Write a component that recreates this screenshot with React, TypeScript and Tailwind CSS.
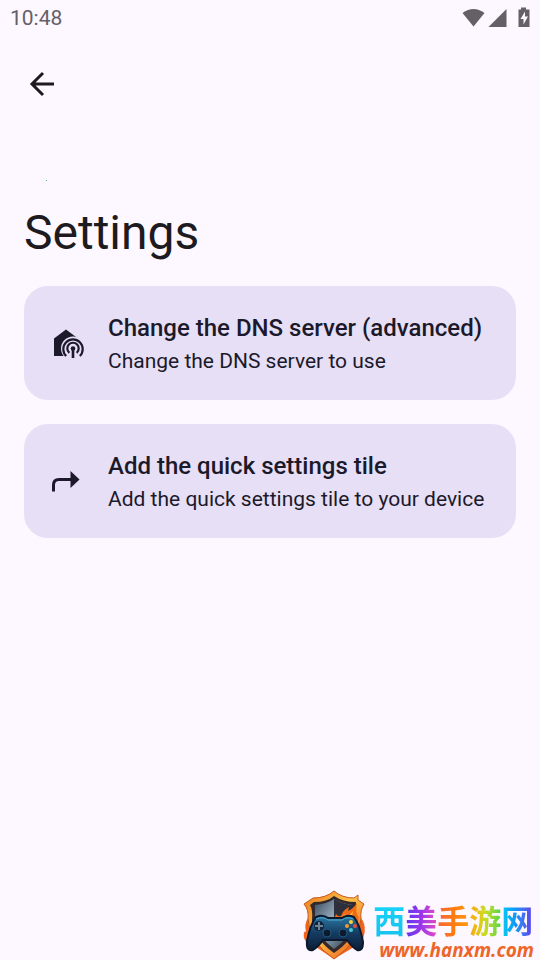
import type { ReactNode } from "react";

const items = [
  {
    title: "Change the DNS server (advanced)",
    copy: "Change the DNS server to use",
    icon: <DnsIcon />,
  },
  {
    title: "Add the quick settings tile",
    copy: "Add the quick settings tile to your device",
    icon: <TileIcon />,
  },
];

const brand = [
  ["西", "bg-linear-to-b from-[#16d8fa] to-[#16c0ee]"],
  ["美", "bg-linear-to-r from-[#5a35ee] via-[#9a35ea] to-[#e845c0]"],
  ["手", "bg-linear-to-r from-[#f4653a] via-[#ff7a10] to-[#ff9a10]"],
  ["游", "bg-linear-to-r from-[#ffa010] via-[#c8dc20] to-[#45d545]"],
  ["网", "bg-linear-to-r from-[#10cdf2] via-[#1490f5] to-[#5a35e8]"],
];

function DnsIcon() {
  return (
    <svg viewBox="0 0 36 36" className="size-9" aria-hidden="true">
      <path d="M6 31V13.5L18 4.5L30 13.5V31Z" fill="#1c192b" />
      <circle cx="25" cy="23.5" r="12" fill="#e6dff6" />
      <path d="M16 31.5H36V36H16Z" fill="#e6dff6" />
      <g fill="none" stroke="#1c192b" strokeWidth="2.2">
        <path d="M18.200 31A9.700 9.700 0 1 1 31.800 31" />
        <path d="M21.300 27.800A5.700 5.700 0 1 1 28.700 27.800" />
        <path d="M25 23.500V33" strokeWidth="2.6" />
      </g>
      <circle cx="25" cy="23.5" r="2.3" fill="#1c192b" />
    </svg>
  );
}

function TileIcon() {
  return (
    <svg viewBox="0 0 36 36" className="size-9" aria-hidden="true">
      <path d="M5.500 28.500V22Q5.500 16.500 11 16.500H24" fill="none" stroke="#1c192b" strokeWidth="3" />
      <path d="M22.500 8L31.500 16.500L22.500 25Z" fill="#1c192b" />
    </svg>
  );
}

function StatusIcons() {
  return (
    <svg viewBox="0 0 70 24" className="h-6 w-[70px]" fill="#646066" aria-hidden="true">
      <path d="M0.500 7Q11.500 -1 22.500 7L11.500 20.500Z" />
      <path d="M44.500 3V21H26.500Z" />
      <path d="M59 1.500H64V3.500H67.500V21H56.500V3.500H59Z" />
      <path d="M63 5.500L58.500 13H61.500V18.500L66 10.500H63Z" fill="#fdf7ff" />
    </svg>
  );
}

function Shield() {
  return (
    <svg viewBox="0 0 64 70" className="h-[70px] w-16 shrink-0" aria-hidden="true">
      <defs>
        <linearGradient id="rim" x1="0" y1="0" x2="1" y2="1">
          <stop offset="0" stopColor="#e8781c" />
          <stop offset="0.45" stopColor="#ffc24a" />
          <stop offset="1" stopColor="#e8501a" />
        </linearGradient>
        <linearGradient id="steel" x1="0" y1="0" x2="1" y2="1">
          <stop offset="0" stopColor="#3a4c60" />
          <stop offset="0.45" stopColor="#9fb4c4" />
          <stop offset="1" stopColor="#1c2838" />
        </linearGradient>
        <linearGradient id="pad" x1="0" y1="0" x2="0" y2="1">
          <stop offset="0" stopColor="#2c7aa6" />
          <stop offset="0.5" stopColor="#143c62" />
          <stop offset="1" stopColor="#0c1c34" />
        </linearGradient>
      </defs>
      <path d="M5 28Q1 34 3 42Q0 40 1 48Q5 58 13 57L31 69L51 57Q60 55 61 45Q63 38 60 31L55 24H8Z" fill="#f0641e" />
      <path d="M31 1Q39 8 51 8L55 5L55 10L61 14Q57 20 58 29Q57 51 31 69Q6 52 5 29Q6 20 1 14L10 8Q23 8 31 1Z" fill="url(#rim)" stroke="#c8581a" />
      <path d="M31 6Q40 12 53 12Q52 20 54 30Q52 49 31 63Q11 49 9 30Q10 20 7 15L11 12Q24 12 31 6Z" fill="#342a2c" />
      <path d="M31 9Q39 14 50 15L51 30Q48 47 31 59Q15 47 12 30L12 15Q24 14 31 9Z" fill="url(#steel)" />
      <path d="M31 9Q39 14 50 15L51 30L48 38H31Z" fill="#2d303a" />
      <path d="M27 30Q32 29 33 24Q35 27 38 26Q40 20 46 17L45 21Q50 19 54 13Q52 23 56 28Q55 34 48 35H27Z" fill="#f36a16" />
      <path d="M32 30Q38 30 42 24L42 27Q47 26 50 21Q48 27 52 30L48 33H34Z" fill="#ffc43c" />
      <path d="M13 27Q20 24 25 28H39Q44 24 51 27Q57 35 60 52Q60 62 54 60Q49 57 44 50H20Q15 57 10 60Q3 62 4 51Q7 35 13 27Z" fill="url(#pad)" stroke="#0b182d" strokeWidth="2" />
      <path d="M13 29Q20 26 25 30H39Q44 26 50 29" fill="none" stroke="#4caed3" />
      <circle cx="16" cy="36" r="5" fill="#12243e" />
      <path d="M16 32V40M12 36H20" stroke="#6b8498" strokeWidth="2" />
      <circle cx="24" cy="43" r="4" fill="#0c1a2f" stroke="#24587e" />
      <circle cx="40" cy="43" r="4" fill="#0c1a2f" stroke="#24587e" />
      <circle cx="48" cy="32" r="2" fill="#ffcf3c" />
      <circle cx="44" cy="36" r="2" fill="#f09a32" />
      <circle cx="52" cy="36" r="2" fill="#ee4c38" />
      <circle cx="48" cy="40" r="2" fill="#45cad2" />
    </svg>
  );
}

function SettingsCard({ title, copy, icon }: { title: string; copy: string; icon: ReactNode }) {
  return (
    <button type="button" className="flex w-full items-center gap-6 rounded-3xl bg-[#e6dff6] p-6 text-left text-[#1c192b]">
      <span className="shrink-0">{icon}</span>
      <span className="block">
        <span className="block text-2xl leading-9 font-medium">{title}</span>
        <span className="block text-[21px] leading-[30px]">{copy}</span>
      </span>
    </button>
  );
}

export default function App() {
  return (
    <div className="flex min-h-screen flex-col bg-[#fdf7ff] font-['Roboto',sans-serif] text-[#1d1b20]">
      <header>
        <div className="flex h-9 items-center justify-between pr-2 pl-[10px] text-[#646066]">
          <span className="text-[21px] leading-6">10:48</span>
          <StatusIcons />
        </div>
        <div className="px-6 pt-[30px]">
          <button type="button" aria-label="Back" className="block size-9">
            <svg viewBox="0 0 36 36" className="size-9" fill="none" stroke="#1d1b20" strokeWidth="3" aria-hidden="true">
              <path d="M30 18H8M19 7L8 18L19 29" />
            </svg>
          </button>
        </div>
      </header>

      <main className="flex-1 px-6 pt-[78px]">
        <div className="ml-[22px] size-px bg-[#5aa0b4]" />
        <h1 className="mt-5 text-5xl leading-[64px]">Settings</h1>
        <div className="mt-[21px] flex flex-col gap-6">
          {items.map((item) => (
            <SettingsCard key={item.title} {...item} />
          ))}
        </div>
      </main>

      <footer className="flex items-end justify-end pr-[6px]">
        <Shield />
        <div className="ml-[6px] flex flex-col">
          <p className="flex font-['Noto_Sans_CJK_SC',sans-serif] text-[32px] leading-[42px] font-bold">
            {brand.map(([glyph, tint]) => (
              <span key={glyph} className={`bg-clip-text text-transparent ${tint}`}>
                {glyph}
              </span>
            ))}
          </p>
          <a href="#" className="pl-[6px] font-['Open_Sans',sans-serif] text-[19px] leading-5 font-bold text-[#ee6528] italic">
            www.hanxm.com
          </a>
        </div>
      </footer>
    </div>
  );
}
